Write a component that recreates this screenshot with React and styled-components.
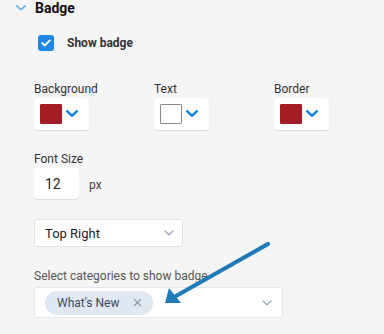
import React from "react";
import styled, { createGlobalStyle } from "styled-components";

const GlobalStyle = createGlobalStyle`
  body {
    margin: 0;
    background: #f5f5f5;
    font-family: Roboto, "Liberation Sans", sans-serif;
    color: #333;
  }
`;

const colorFields = [
  { label: "Background", color: "#a31d27" },
  { label: "Text", color: "#ffffff", outlined: true },
  { label: "Border", color: "#a31d27" },
];

const Chevron = ({ color = "#1e88e5", width = 12, stroke = 2.6 }) => (
  <svg width={width} height={width * 0.6} viewBox="0 0 12 7" fill="none">
    <path
      d="M1 1 L6 5.6 L11 1"
      stroke={color}
      strokeWidth={stroke}
      strokeLinecap="round"
      strokeLinejoin="round"
    />
  </svg>
);

const App = () => {
  return (
    <>
      <GlobalStyle />
      <Wrapper>
        <Header>
          <Chevron color="#64b0ec" width={10} stroke={2} />
          <Title>Badge</Title>
        </Header>

        <CheckRow>
          <Checkbox>
            <svg width="10" height="8" viewBox="0 0 10 8" fill="none">
              <path
                d="M1.2 4 L3.8 6.5 L8.8 1.4"
                stroke="#fff"
                strokeWidth="1.8"
                strokeLinecap="round"
                strokeLinejoin="round"
              />
            </svg>
          </Checkbox>
          <CheckLabel>Show badge</CheckLabel>
        </CheckRow>

        <ColorGrid>
          {colorFields.map((f) => (
            <Field key={f.label}>
              <Label>{f.label}</Label>
              <ColorCard>
                <Swatch $color={f.color} $outlined={f.outlined} />
                <Chevron />
              </ColorCard>
            </Field>
          ))}
        </ColorGrid>

        <Field $top={22}>
          <Label>Font Size</Label>
          <SizeRow>
            <SizeInput>12</SizeInput>
            <Unit>px</Unit>
          </SizeRow>
        </Field>

        <Select>
          <span>Top Right</span>
          <Chevron color="#8a9bb3" width={10} stroke={1.3} />
        </Select>

        <CategoryLabel>Select categories to show badge</CategoryLabel>
        <MultiSelect>
          <Chip>
            What's New
            <svg width="9" height="9" viewBox="0 0 9 9">
              <path
                d="M1 1 L8 8 M8 1 L1 8"
                stroke="#8a99ad"
                strokeWidth="1.2"
              />
            </svg>
          </Chip>
          <Chevron color="#8a9bb3" width={10} stroke={1.3} />
        </MultiSelect>

        <Arrow width="384" height="334" viewBox="0 0 384 334">
          <line
            x1="268"
            y1="244"
            x2="176"
            y2="296"
            stroke="#1f7ab8"
            strokeWidth="4.2"
            strokeLinecap="round"
          />
          <polygon points="165,303 169,288 181,303" fill="#1f7ab8" />
        </Arrow>
      </Wrapper>
    </>
  );
};

export default App;

const Wrapper = styled.div`
  position: relative;
  width: 384px;
  height: 334px;
  overflow: hidden;
  padding-left: 34px;
  box-sizing: border-box;
`;

const Header = styled.div`
  display: flex;
  align-items: center;
  gap: 9px;
  margin-left: -18px;
  height: 16px;
`;

const Title = styled.span`
  font-size: 14px;
  font-weight: 700;
  color: #111;
`;

const CheckRow = styled.div`
  display: flex;
  align-items: center;
  gap: 13px;
  margin: 19px 0 0 4px;
  height: 16px;
`;

const Checkbox = styled.div`
  width: 16px;
  height: 16px;
  border-radius: 3px;
  background: #1e88e5;
  display: flex;
  align-items: center;
  justify-content: center;
`;

const CheckLabel = styled.span`
  font-size: 12px;
  font-weight: 700;
  color: #333;
`;

const ColorGrid = styled.div`
  display: grid;
  grid-template-columns: 120px 120px 120px;
  margin-top: 31px;
`;

const Field = styled.div`
  display: flex;
  flex-direction: column;
  align-items: flex-start;
  margin-top: ${(p) => p.$top || 0}px;
`;

const Label = styled.div`
  font-size: 12px;
  line-height: 15px;
  color: #333;
  margin-bottom: 1px;
`;

const ColorCard = styled.div`
  display: flex;
  align-items: center;
  gap: 4px;
  width: 55px;
  height: 32px;
  box-sizing: border-box;
  padding: 0 6px;
  background: #fff;
  border-radius: 4px;
  box-shadow: 0 1px 1px rgba(0, 0, 0, 0.12);
`;

const Swatch = styled.div`
  width: 22px;
  height: 20px;
  box-sizing: border-box;
  background: ${(p) => p.$color};
  border: 1px solid ${(p) => (p.$outlined ? "#8a8a8a" : p.$color)};
  border-radius: 1px;
`;

const SizeRow = styled.div`
  display: flex;
  align-items: center;
  gap: 10px;
`;

const SizeInput = styled.div`
  width: 45px;
  height: 31px;
  box-sizing: border-box;
  padding-left: 11px;
  display: flex;
  align-items: center;
  background: #fff;
  border-radius: 4px;
  box-shadow: 0 1px 1px rgba(0, 0, 0, 0.1);
  font-size: 14px;
  color: #222;
`;

const Unit = styled.span`
  font-size: 12px;
  color: #444;
  margin-top: 2px;
`;

const Select = styled.div`
  display: flex;
  align-items: center;
  justify-content: space-between;
  width: 149px;
  height: 28px;
  box-sizing: border-box;
  margin-top: 20px;
  padding: 0 8px 0 10px;
  background: #fff;
  border: 1px solid #dfe4ec;
  border-radius: 3px;
  font-size: 13px;
  color: #222;
`;

const CategoryLabel = styled.div`
  font-size: 12px;
  line-height: 15px;
  color: #555;
  margin-top: 22px;
`;

const MultiSelect = styled.div`
  display: flex;
  align-items: center;
  justify-content: space-between;
  width: 249px;
  height: 31px;
  box-sizing: border-box;
  margin-top: 3px;
  padding: 0 10px 0 10px;
  background: #fff;
  border: 1px solid #e2e6ee;
  border-radius: 3px;
`;

const Chip = styled.div`
  display: flex;
  align-items: center;
  gap: 14px;
  height: 24px;
  padding: 0 11px 0 12px;
  border-radius: 12px;
  background: #e1e7f0;
  font-size: 12px;
  color: #3b4a5e;
`;

const Arrow = styled.svg`
  position: absolute;
  left: 0;
  top: 0;
  pointer-events: none;
`;
